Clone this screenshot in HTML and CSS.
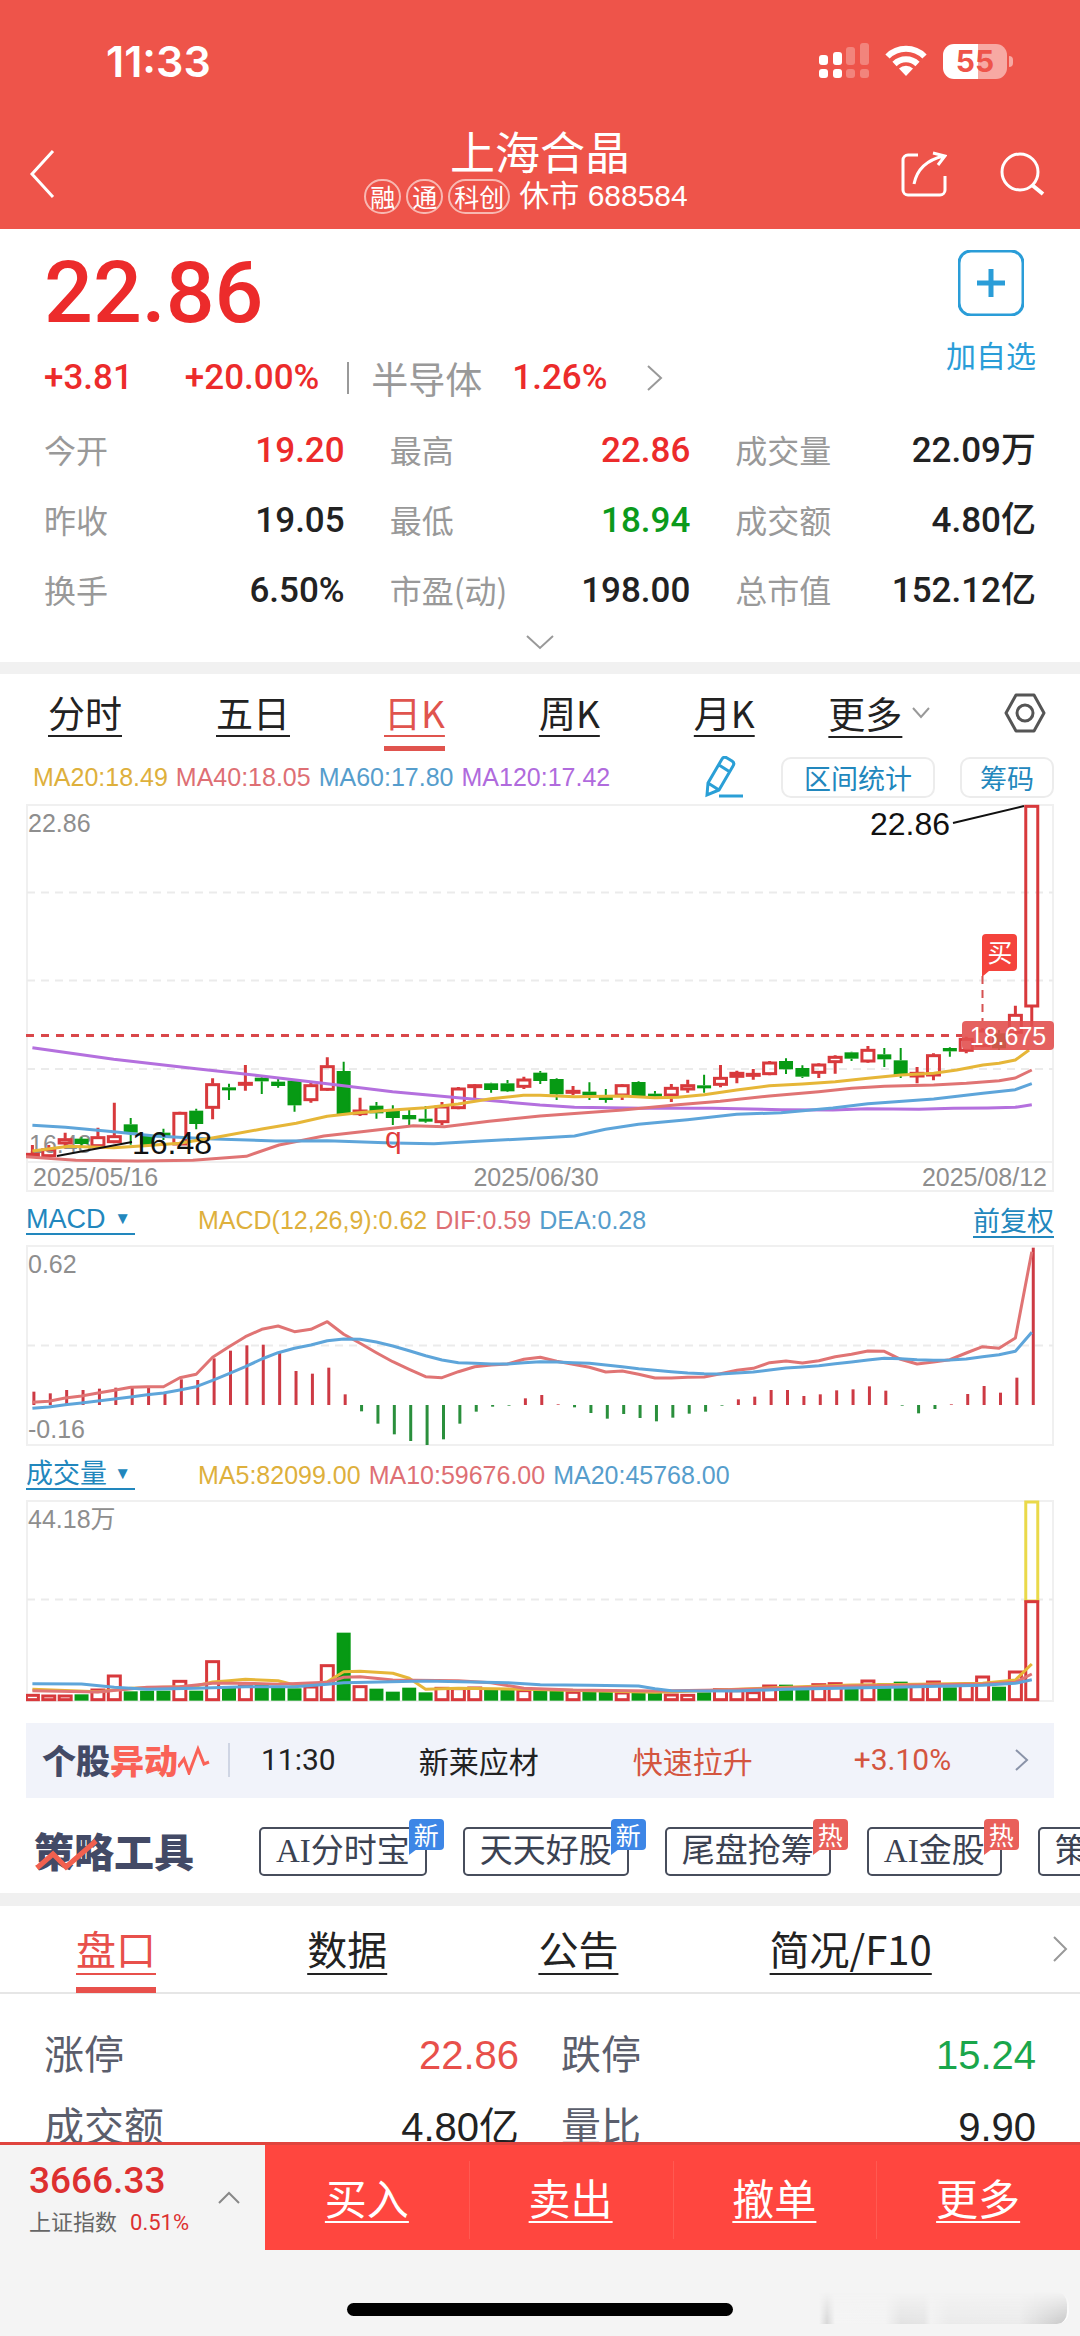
FILE: index.html
```html
<!DOCTYPE html>
<html lang="zh-CN">
<head>
<meta charset="utf-8">
<meta name="viewport" content="width=device-width, initial-scale=1">
<title>上海合晶 688584</title>
<link rel="stylesheet" href="styles.css">
</head>
<body>
<header class="top">
  <div class="status">
    <time class="clock">11:33</time>
    <div class="status-icons">
      <svg width="50" height="36" viewBox="0 0 50 36" aria-hidden="true">
        <g fill="#fff"><rect x="0" y="12" width="9" height="10" rx="3"/><rect x="0" y="26" width="9" height="9" rx="3"/><rect x="14" y="9" width="9" height="13" rx="3"/><rect x="14" y="26" width="9" height="9" rx="3"/></g>
        <g fill="#fff" opacity=".28"><rect x="27" y="4" width="9" height="18" rx="3"/><rect x="27" y="26" width="9" height="9" rx="3"/><rect x="41" y="0" width="9" height="22" rx="3"/><rect x="41" y="26" width="9" height="9" rx="3"/></g>
      </svg>
      <svg width="42" height="32" viewBox="0 0 42 32" aria-hidden="true">
        <g fill="none" stroke="#fff" stroke-width="6"><path d="M2.500 11.500a26 26 0 0 1 37 0"/><path d="M9.500 19a16.500 16.500 0 0 1 23 0"/></g>
        <path d="M21 31l-7-7.500a10 10 0 0 1 14 0z" fill="#fff"/>
      </svg>
      <div class="battery"><span>55</span></div>
    </div>
  </div>
  <div class="titlebar">
    <button class="icon-btn" aria-label="返回">
      <svg width="26" height="50" viewBox="0 0 26 50"><path d="M24 2L3 25l21 23" fill="none" stroke="#fff" stroke-width="3"/></svg>
    </button>
    <div class="title">
      <h1>上海合晶</h1>
      <p><span class="pill">融</span><span class="pill">通</span><span class="pill">科创</span><span class="code">休市 688584</span></p>
    </div>
    <div class="actions">
      <button class="icon-btn" aria-label="分享">
        <svg width="46" height="46" viewBox="0 0 46 46" fill="none" stroke="#fff" stroke-width="3"><path d="M17 4H7a5 5 0 0 0-5 5v30a5 5 0 0 0 5 5h32a5 5 0 0 0 5-5V25"/><path d="M13 33C16 18 25 9 43 5M32 2l12 3-7 9"/></svg>
      </button>
      <button class="icon-btn" aria-label="搜索">
        <svg width="46" height="46" viewBox="0 0 46 46" fill="none" stroke="#fff" stroke-width="3"><circle cx="20" cy="21" r="18"/><path d="M32 34l11 9" stroke-width="4"/></svg>
      </button>
    </div>
  </div>
</header>

<main class="content">
  <section class="quote">
    <div class="quote-head">
      <div>
        <p class="price">22.86</p>
        <p class="change"><span>+3.81</span><span class="pct">+20.00%</span><a class="sector" href="#"><span class="name">半导体</span><span>1.26%</span><svg width="18" height="28" viewBox="0 0 18 28"><path d="M2 2l13 12L2 26" fill="none" stroke="#999" stroke-width="2"/></svg></a></p>
      </div>
      <button class="add"><svg width="66" height="66" viewBox="0 0 66 66" fill="none" stroke="#2a9dd8"><rect x="1" y="1" width="64" height="64" rx="12" stroke-width="3"/><path d="M19 33h28M33 19v28" stroke-width="5"/></svg><span>加自选</span></button>
    </div>
    <dl class="stats">
      <div><dt>今开</dt><dd class="up">19.20</dd></div><div><dt>最高</dt><dd class="up">22.86</dd></div><div><dt>成交量</dt><dd>22.09万</dd></div>
      <div><dt>昨收</dt><dd>19.05</dd></div><div><dt>最低</dt><dd class="down">18.94</dd></div><div><dt>成交额</dt><dd>4.80亿</dd></div>
      <div><dt>换手</dt><dd>6.50%</dd></div><div><dt>市盈(动)</dt><dd>198.00</dd></div><div><dt>总市值</dt><dd>152.12亿</dd></div>
    </dl>
    <button class="expand" aria-label="展开"><svg width="30" height="16" viewBox="0 0 30 16"><path d="M2 2l13 12L28 2" fill="none" stroke="#999" stroke-width="2"/></svg></button>
  </section>

  <section class="charts">
    <div class="periods">
      <nav><a href="#">分时</a><a href="#">五日</a><a href="#" class="active">日K</a><a href="#">周K</a><a href="#">月K</a></nav>
      <button class="more"><span>更多</span><svg width="18" height="12" viewBox="0 0 18 12"><path d="M1 1l8 9 8-9" fill="none" stroke="#999" stroke-width="2"/></svg></button>
      <button class="icon-btn" aria-label="图表设置"><svg width="42" height="42" viewBox="0 0 42 42" fill="none" stroke="#555" stroke-width="3"><path d="M12 3h18l10 18-10 18H12L2 21z" stroke-linejoin="round"/><circle cx="21" cy="21" r="8"/></svg></button>
    </div>
    <div class="tools">
      <p class="legend"><span class="ma-a">MA20:18.49</span><span class="ma-b">MA40:18.05</span><span class="ma-c">MA60:17.80</span><span class="ma-d">MA120:17.42</span></p>
      <div class="tool-btns">
        <button class="icon-btn" aria-label="画线"><svg width="38" height="42" viewBox="0 0 38 42" fill="none" stroke="#2a9fd6" stroke-width="3"><path d="M2 39l1-12L17 3q2-3 5-1l5 3q3 2 1 5L14 34zM14 9l11 7M3 27l11 7"/><path d="M14 40h24"/></svg></button>
        <button class="chip">区间统计</button>
        <button class="chip narrow">筹码</button>
      </div>
    </div>
    <svg id="price" class="plot" viewBox="26 804 1028 388" role="img" aria-label="日K线图">
      <g class="frame"><rect x="27" y="805" width="1026" height="386"/><path d="M27 1162H1053"/></g>
      <path class="grid" d="M27 892.500H1053M27 980.500H1053M27 1069H1053"/>
      <path class="cost" d="M26 1035.500H962"/>
      <text class="axis" x="28" y="832">22.86</text>
      <text class="axis" x="29" y="1153">16.48</text>
      <g class="series"></g>
      <path class="pointer" d="M953 823L1024 806M57 1156L132 1142"/>
      <text class="mark" x="870" y="835">22.86</text>
      <text class="mark" x="132" y="1154">16.48</text>
      <text class="mark event" x="385" y="1148">q</text>
      <path class="buy-line" d="M982.500 976V1021"/>
      <path class="buy" d="M986 934h27q4 0 4 4v29q0 4-4 4h-24l-7 6v-39q0-4 4-4z"/>
      <text class="buy-text" x="1000" y="962">买</text>
      <rect class="tag" x="962" y="1021" width="92" height="29" rx="4"/>
      <text class="tag-text" x="1008" y="1045">18.675</text>
      <text class="axis" x="33" y="1186">2025/05/16</text>
      <text class="axis mid" x="536" y="1186">2025/06/30</text>
      <text class="axis end" x="1047" y="1186">2025/08/12</text>
    </svg>
    <div class="sub-head">
      <a href="#" class="pick">MACD<i>▼</i></a>
      <p class="legend"><span class="ma-a">MACD(12,26,9):0.62</span><span class="ma-b">DIF:0.59</span><span class="ma-c">DEA:0.28</span></p>
      <a href="#" class="adjust">前复权</a>
    </div>
    <svg id="macd" class="plot" viewBox="26 1245 1028 202" role="img" aria-label="MACD">
      <g class="frame"><rect x="27" y="1246" width="1026" height="199"/></g>
      <path class="grid" d="M27 1345.500H1053"/>
      <text class="axis" x="28" y="1273">0.62</text>
      <text class="axis" x="28" y="1438">-0.16</text>
      <g class="series"></g>
    </svg>
    <div class="sub-head">
      <a href="#" class="pick">成交量<i>▼</i></a>
      <p class="legend"><span class="ma-a">MA5:82099.00</span><span class="ma-b">MA10:59676.00</span><span class="ma-c">MA20:45768.00</span></p>
    </div>
    <svg id="volume" class="plot" viewBox="26 1500 1028 202" role="img" aria-label="成交量">
      <g class="frame"><rect x="27" y="1501" width="1026" height="200"/></g>
      <path class="grid" d="M27 1599.500H1053"/>
      <text class="axis" x="28" y="1528">44.18万</text>
      <g class="series"></g>
    </svg>

    <a class="ticker" href="#">
      <span class="ticker-logo">个股<em>异动</em><svg width="32" height="30" viewBox="0 0 32 30"><path d="M0 22L6 14l5 14L20 4l6 15 5-2" fill="none" stroke="#fa6257" stroke-width="3"/></svg></span>
      <span class="t-time">11:30</span><span class="t-name">新莱应材</span><span class="t-kind">快速拉升</span><span class="t-pct">+3.10%</span>
      <svg width="16" height="24" viewBox="0 0 16 24"><path d="M2 2l11 10L2 22" fill="none" stroke="#8a93a8" stroke-width="2"/></svg>
    </a>
    <div class="strategy">
      <h2>策略工具<svg width="66" height="42" viewBox="0 0 66 42"><path d="M3 39l16-14 13 13 30-26" fill="none" stroke="#f2604f" stroke-width="5"/></svg></h2>
      <button>AI分时宝<b class="new">新</b></button>
      <button>天天好股<b class="new">新</b></button>
      <button>尾盘抢筹<b>热</b></button>
      <button>AI金股<b>热</b></button>
      <button>策略选股</button>
    </div>
  </section>

  <section class="detail">
    <nav class="tabs">
      <a href="#" class="active">盘口</a><a href="#">数据</a><a href="#">公告</a><a href="#">简况/F10</a>
      <button class="icon-btn" aria-label="更多栏目"><svg width="16" height="28" viewBox="0 0 16 28"><path d="M2 2l12 12L2 26" fill="none" stroke="#999" stroke-width="2"/></svg></button>
    </nav>
    <dl class="board">
      <div><dt>涨停</dt><dd class="up">22.86</dd></div><div><dt>跌停</dt><dd class="down">15.24</dd></div>
      <div><dt>成交额</dt><dd>4.80亿</dd></div><div><dt>量比</dt><dd>9.90</dd></div>
    </dl>
  </section>
</main>

<footer class="bottom">
  <div class="trade">
    <button class="index">
      <span class="idx"><strong>3666.33</strong><small>上证指数<em>0.51%</em></small></span>
      <svg width="22" height="13" viewBox="0 0 22 13"><path d="M1 12L11 2l10 10" fill="none" stroke="#888" stroke-width="2"/></svg>
    </button>
    <nav><a href="#">买入</a><a href="#">卖出</a><a href="#">撤单</a><a href="#">更多</a></nav>
  </div>
  <div class="home"><span class="bar"></span><span class="smear"></span></div>
</footer>
<script src="chart.js"></script>
</body>
</html>
```
FILE: styles.css
```css
:root {
  --red: #ec2b2b;
  --green: #0b9a1c;
  --blue: #2287bd;
  --cjk: "Noto Sans CJK SC", sans-serif;
}
* { box-sizing: border-box; margin: 0; padding: 0; }
body {
  display: flex;
  flex-direction: column;
  height: 100vh;
  background: #fff;
  color: #222;
  font-family: "Liberation Sans", var(--cjk);
}
a { color: inherit; }
button { border: 0; background: none; color: inherit; font: inherit; }
svg { display: block; flex: none; }
em, i { font-style: normal; }
.icon-btn { display: flex; }

.top { flex: none; background: #ee544a; color: #fff; }
.status {
  display: flex;
  align-items: center;
  justify-content: space-between;
  height: 122px;
  padding: 0 73px 0 106px;
}
.clock { font: 600 43px/50px Inter, sans-serif; }
.status-icons { display: flex; align-items: center; gap: 16px; }
.battery {
  position: relative;
  width: 64px;
  height: 35px;
  border-radius: 11px;
  background: linear-gradient(90deg, #fff 55%, #f7a9a3 55%);
  color: #ee544a;
  font: 700 30px/35px Inter, sans-serif;
  text-align: center;
}
.battery::after {
  content: "";
  position: absolute;
  left: 66px;
  top: 12px;
  width: 4px;
  height: 11px;
  border-radius: 0 4px 4px 0;
  background: #f7a9a3;
}
.titlebar {
  display: grid;
  grid-template-columns: 1fr auto 1fr;
  height: 107px;
  padding: 4px 29px 0;
}
.titlebar > .icon-btn { margin-top: 23px; align-self: start; }
.title { text-align: center; }
.title h1 { font: 400 45px/50px var(--cjk); }
.title p {
  display: flex;
  align-items: center;
  justify-content: center;
  height: 40px;
  padding-right: 28px;
  font-size: 30px;
  line-height: 36px;
}
.pill {
  height: 35px;
  margin-right: 5px;
  padding: 0 4px;
  border: 2px solid #f8b8b2;
  border-radius: 18px;
  font: 400 25px/30px var(--cjk);
}
.code { margin-left: 4px; }
.actions { display: flex; justify-content: flex-end; gap: 53px; margin-top: 25px; padding-right: 5px; }

.content {
  flex: 1;
  min-height: 0;
  overflow-y: auto;
  scrollbar-width: none;
}
.quote { padding: 0 44px; border-bottom: 12px solid #f1f1f1; }
.quote-head { display: flex; justify-content: space-between; padding-top: 14px; }
.price { height: 100px; color: var(--red); font: 500 86px/100px Roboto, sans-serif; }
.change {
  display: flex;
  align-items: center;
  height: 70px;
  color: var(--red);
  font: 500 35px/50px Roboto, sans-serif;
}
.change .pct { margin-left: 52px; }
.sector {
  display: flex;
  align-items: center;
  gap: 30px;
  margin-left: 28px;
  text-decoration: none;
}
.sector::before { content: ""; width: 2px; height: 32px; background: #999; }
.sector .name { margin-left: -8px; color: #999; font: 400 37px/50px var(--cjk); }
.sector svg { margin-left: 8px; }
.add {
  display: flex;
  flex-direction: column;
  align-items: center;
  gap: 18px;
  height: 150px;
  padding-top: 7px;
  color: #2a9dd8;
  font: 400 30px/40px var(--cjk);
}
.stats {
  display: grid;
  grid-template-columns: repeat(3, 1fr);
  column-gap: 45px;
  padding-top: 3px;
}
.stats div, .board div { display: flex; justify-content: space-between; align-items: center; }
.stats div { height: 70px; }
.stats dt { padding-bottom: 4px; color: #999; font: 400 32px/44px var(--cjk); }
.stats dd { font: 500 35px/48px Roboto, var(--cjk); }
.stats .up, .board .up { color: var(--red); }
.stats .down { color: var(--green); }
.expand { display: flex; justify-content: center; width: 100%; height: 36px; padding-top: 8px; }

.periods {
  display: flex;
  align-items: center;
  justify-content: space-between;
  height: 78px;
  padding: 0 34px 0 48px;
  font-family: var(--cjk);
  font-size: 37px;
}
.periods nav { display: flex; gap: 94px; }
.periods a, .more span { text-decoration: underline; text-decoration-thickness: 2px; text-underline-offset: 7px; }
.periods a { height: 76px; line-height: 74px; }
.periods .active { border-bottom: 5px solid #e0544e; color: #e0544e; }
.more { display: flex; align-items: center; gap: 10px; line-height: 74px; }
.tools {
  display: flex;
  align-items: center;
  justify-content: space-between;
  height: 52px;
  padding: 0 26px 2px 33px;
}
.legend { display: flex; gap: 8px; font-size: 25px; line-height: 30px; }
.ma-a { color: #deb03c; }
.ma-b { color: #de6f74; }
.ma-c { color: #569dcc; }
.ma-d { color: #b06bdd; }
.tool-btns { display: flex; align-items: center; gap: 25px; }
.tool-btns .icon-btn { margin-right: 13px; }
.chip {
  height: 41px;
  padding: 0 21px;
  border: 2px solid #ececec;
  border-radius: 10px;
  color: var(--blue);
  font: 400 27px/37px var(--cjk);
}
.chip.narrow { padding: 0 18px; }

.plot { width: calc(100% - 52px); margin: 0 26px; }
.frame { fill: none; stroke: #f0f0f0; stroke-width: 2; }
.grid { stroke: #ebebeb; stroke-width: 2; stroke-dasharray: 8 6; }
.cost { stroke: #d9474a; stroke-width: 3; stroke-dasharray: 8 7; }
.plot text { font-family: "Liberation Sans", var(--cjk); }
.axis { fill: #8e8e8e; font-size: 25px; }
.mid { text-anchor: middle; }
.end { text-anchor: end; }
.mark { fill: #111; font-size: 32px; }
.mark.event { fill: #e03c3c; font-size: 30px; }
.pointer { fill: none; stroke: #111; stroke-width: 2; }
.buy { fill: #f4433c; }
.buy-line { stroke: #d65252; stroke-width: 2; stroke-dasharray: 8 6; }
.buy-text, .tag-text { fill: #fff; font-size: 25px; text-anchor: middle; }
.tag { fill: #e2504f; fill-opacity: .9; }
.rise { fill: none; stroke: #d8393c; stroke-width: 3; }
.fall { fill: #079a14; stroke: #079a14; stroke-width: 2; }
.bar-up { stroke: #cd3a44; stroke-width: 3; }
.bar-down { stroke: #2a8f3c; stroke-width: 3; }
.est { fill: #fff; stroke: #ead94a; stroke-width: 3; }
.line { fill: none; stroke-width: 3; stroke-linejoin: round; }
.line.a { stroke: #e6b638; }
.line.b { stroke: #e07474; }
.line.c { stroke: #5ea5da; }
.line.d { stroke: #b470de; }

.sub-head { display: flex; align-items: center; height: 53px; padding: 2px 26px 0; }
.pick {
  display: flex;
  align-items: center;
  justify-content: space-between;
  width: 109px;
  height: 30px;
  margin-right: 63px;
  padding-right: 4px;
  border-bottom: 2px solid;
  color: var(--blue);
  font-size: 27px;
  line-height: 28px;
  text-decoration: none;
}
.pick i { font-size: 17px; }
.adjust { margin-left: auto; color: var(--blue); font-size: 27px; text-underline-offset: 5px; }

.ticker {
  display: flex;
  align-items: center;
  height: 75px;
  margin: 21px 26px 0;
  padding: 0 24px 2px 16px;
  background: #f1f3fa;
  color: #222;
  font: 400 30px/40px var(--cjk);
  text-decoration: none;
}
.ticker-logo {
  display: flex;
  align-items: center;
  padding-right: 18px;
  border-right: 2px solid #cfd5e4;
  color: #434a66;
  font: 900 34px/34px var(--cjk);
}
.ticker-logo em { color: #fa6257; }
.t-time, .t-pct { font-family: Roboto, sans-serif; }
.t-time { margin-left: 31px; }
.t-name { margin-left: 83px; }
.t-kind { margin-left: 94px; color: #d4553f; }
.t-pct { margin-left: 101px; color: #d4553f; }
.ticker > svg { margin-left: auto; }

.strategy {
  display: flex;
  align-items: center;
  gap: 36px;
  height: 95px;
  padding: 18px 0 6px 34px;
  overflow: hidden;
}
.strategy h2 {
  position: relative;
  flex: none;
  width: 189px;
  padding-bottom: 4px;
  color: #434a66;
  font: 900 40px/46px var(--cjk);
}
.strategy h2 svg { position: absolute; left: 0; top: 2px; }
.strategy button {
  position: relative;
  flex: none;
  height: 49px;
  padding: 0 15px;
  border: 2px solid #474d5c;
  border-radius: 5px;
  color: #3b4252;
  font: 400 33px/45px "Liberation Serif", var(--cjk);
}
.strategy b {
  position: absolute;
  right: -19px;
  top: -10px;
  width: 35px;
  height: 31px;
  border-radius: 4px 4px 4px 0;
  background: #e9605a;
  color: #fff;
  font: 400 25px/30px var(--cjk);
}
.strategy b::after {
  content: "";
  position: absolute;
  left: 0;
  top: 30px;
  border: solid transparent;
  border-width: 0 8px 6px 0;
  border-top: 6px solid #e9605a;
  border-bottom: 0;
}
.strategy .new { background: #3d86e6; }
.strategy .new::after { border-top-color: #3d86e6; }

.detail { border-top: 13px solid #f0f0f0; }
.tabs {
  display: flex;
  justify-content: space-between;
  align-items: center;
  height: 88px;
  padding: 0 12px 0 76px;
  border-bottom: 2px solid #e6e6e6;
  font: 400 40px/86px var(--cjk);
}
.tabs a { height: 88px; text-decoration: underline; text-decoration-thickness: 2px; text-underline-offset: 8px; }
.tabs a + a { margin-left: 31px; }
.tabs .active { border-bottom: 6px solid #e8504b; color: #e8504b; }
.board {
  display: grid;
  grid-template-columns: 1fr 1fr;
  column-gap: 42px;
  padding: 25px 44px 0;
}
.board div { height: 72px; font: 400 40px/60px "Liberation Sans", var(--cjk); }
.board dt { color: #5b5e6c; }
.board .up { color: #e8504b; }
.board .down { color: #1aa64b; }

.bottom { flex: none; background: #f4f4f4; }
.trade { display: flex; height: 108px; border-top: 3px solid #e0443e; }
.index { display: flex; align-items: center; justify-content: space-between; width: 265px; padding: 0 25px 0 29px; text-align: left; }
.idx { display: flex; flex-direction: column; padding-top: 4px; }
.idx strong { color: #dd3030; font: 500 37px/44px Roboto, sans-serif; }
.idx small { color: #666; font: 400 22px/34px var(--cjk); }
.idx em { margin-left: 13px; color: #dd3030; font-family: Roboto, sans-serif; }
.trade nav { display: flex; flex: 1; background: #ff463f; color: #fff; }
.trade nav a {
  flex: 1;
  font: 400 42px/104px var(--cjk);
  text-align: center;
  text-decoration-thickness: 2px;
  text-underline-offset: 6px;
}
.trade nav a + a { background: linear-gradient(#ff5a52, #ff5a52) 0 16px / 1px 78px no-repeat; }
.home { position: relative; display: flex; justify-content: center; height: 86px; padding-top: 53px; }
.bar { width: 386px; height: 13px; border-radius: 7px; background: #000; }
.smear {
  position: absolute;
  right: 11px;
  top: 42px;
  width: 250px;
  height: 32px;
  border-radius: 0 12px 12px 0;
  border-right: 2px solid #fff;
  background: linear-gradient(90deg, #f4f4f4 0, #d6d6d6 8px, #f4f4f4 16px, #f3f3f3 66px, #e2e2e2 82px, #e4e4e4 105px, #f2f2f2 112px, #eaeaea 130px, #ebebeb 200px, #c8c8c8 246px);
  -webkit-mask-image: linear-gradient(transparent, #000);
  mask-image: linear-gradient(transparent, #000);
}
```
FILE: chart.js
```js
const NS = 'http://www.w3.org/2000/svg';
const X = i => 32.4 + 16.383 * i;

function add(parent, tag, cls, attrs) {
  const el = document.createElementNS(NS, tag);
  el.setAttribute('class', cls);
  for (const k in attrs) el.setAttribute(k, attrs[k]);
  parent.appendChild(el);
}
function group(id) { return document.querySelector('#' + id + ' .series'); }
function line(g, cls, pts, base) {
  const d = pts.map(([i, v]) => X(i).toFixed(1) + ',' + (base + v / 3).toFixed(1)).join(' ');
  add(g, 'polyline', 'line ' + cls, { points: d });
}

/* Each candle: direction, body top, body bottom, high, low */
const candles = `R 1120 1130 1095 1130|R 1106 1130 1095 1130|R 1076 1092 1058 1105|G 1076 1092 1072 1098|R 1070 1100 1043 1103|R 1067 1088 968 1090|G 1033 1058 1014 1094|G 1065 1095 1062 1100|G 1058 1072 1046 1080|R 997 1095 995 1097|G 992 1032 986 1048|R 911 985 895 1018|G 922 927 911 960|R 907 913 855 932|G 893 904 888 942|G 905 918 895 923|G 902 976 900 995|R 914 962 905 968|R 857 931 832 933|G 873 1003 845 1005|R 990 1004 953 1008|G 977 1000 966 1016|G 990 1014 976 1035|G 1005 1018 985 1035|G 1016 1024 978 1028|R 978 1028 966 1035|R 924 986 921 988|R 914 919 912 960|G 910 930 908 938|G 910 934 900 936|R 897 922 890 927|G 878 903 873 912|G 897 943 895 960|R 931 938 918 945|G 935 946 907 960|G 950 960 927 968|R 914 948 912 960|G 906 948 904 950|G 941 950 933 952|R 922 948 912 966|R 914 930 899 938|G 916 921 884 938|R 892 916 855 922|R 877 892 872 910|R 880 887 867 899|R 846 884 843 886|G 843 868 835 882|G 864 890 856 894|R 852 880 850 894|R 829 848 826 881|G 817 836 815 843|R 808 846 798 848|G 823 838 804 861|G 841 886 804 894|R 877 891 861 910|R 824 888 820 901|G 804 814 802 830|R 775 814 770 820|R 750 800 745 802|G 760 805 750 810|R 703 760 677 765|R 76 681 76 740`
  .split('|').map(s => s.split(' '));

const price = group('price');
candles.forEach(([dir, top, bottom, high, low], i) => {
  const cls = dir === 'R' ? 'rise' : 'fall';
  const y = v => 780 + v / 3;
  add(price, 'path', cls, { d: `M${X(i)} ${y(high)}V${y(top)}M${X(i)} ${y(bottom)}V${y(low)}` });
  add(price, 'rect', cls, { x: X(i) - 6, y: y(top) + 1, width: 12, height: Math.max(1, (bottom - top) / 3 - 2) });
});
/* Converts horizontal chart units to a candle index */
const at = pts => pts.map(([x, v]) => [(x - 94) / 47.57, v]);
line(price, 'd', at([[94,803],[330,838],[570,866],[760,888],[950,911],[1140,935],[1330,953],[1568,975],[1668,982],[1868,985],[2068,985],[2268,989],[2418,990],[2518,986],[2668,988],[2768,985],[2868,984],[2948,982],[2996,974]]), 780);
line(price, 'b', at([[75,1130],[220,1141],[400,1143],[560,1141],[715,1129],[810,1095],[940,1068],[1050,1055],[1200,1037],[1290,1040],[1420,1024],[1568,1008],[1808,990],[1968,974],[2091,964],[2234,948],[2377,935],[2473,925],[2568,919],[2711,915],[2806,910],[2901,902],[2948,894],[2996,870]]), 780);
line(price, 'c', at([[94,1036],[190,1042],[330,1055],[450,1068],[600,1076],[800,1083],[950,1082],[1140,1089],[1260,1091],[1400,1083],[1568,1074],[1668,1068],[1758,1048],[1854,1033],[1996,1019],[2139,1003],[2268,998],[2418,984],[2520,971],[2711,957],[2854,940],[2948,929],[2996,911]]), 780);
line(price, 'a', at([[94,1113],[200,1099],[330,1103],[420,1097],[520,1090],[620,1073],[760,1047],[860,1030],[950,1009],[1040,998],[1140,990],[1235,983],[1330,972],[1425,956],[1520,946],[1568,946],[1668,950],[1808,948],[1901,953],[1968,952],[2044,944],[2139,930],[2234,917],[2330,912],[2425,905],[2520,895],[2616,885],[2711,880],[2778,870],[2854,855],[2901,850],[2948,840],[2988,810]]), 780);

const macd = group('macd');
const hist = [605,610,600,600,596,593,590,588,608,568,570,505,482,466,464,488,543,551,533,613,664,701,733,753,765,748,701,665,650,647,625,615,643,652,669,686,672,684,694,683,671,665,647,628,620,600,600,618,613,601,598,589,602,647,670,657,643,612,588,608,563,173];
hist.forEach((v, i) => add(macd, 'path', v < 645 ? 'bar-up' : 'bar-down', { d: `M${X(i) + 1.5} 1405V${1190 + v / 3}` }));
const dif = [637,634,624,618,609,601,592,590,590,563,553,502,470,440,418,408,425,418,395,433,460,488,515,538,560,563,545,530,525,522,508,502,514,523,532,546,543,553,564,564,562,561,551,541,535,518,513,519,512,500,493,483,484,508,522,516,509,489,470,475,444,185];
const dea = [655,651,644,639,633,627,621,614,609,600,590,571,551,530,507,488,475,465,452,447,448,456,468,482,497,510,518,520,522,522,518,515,516,518,520,525,530,536,541,545,549,551,552,549,546,540,534,531,527,521,516,510,505,506,509,511,510,507,500,494,484,427];
line(macd, 'b', dif.map((v, i) => [i, v]), 1190);
line(macd, 'c', dea.map((v, i) => [i, v]), 1190);

const volume = group('volume');
add(volume, 'rect', 'est', { x: X(61) - 6, y: 1502, width: 12, height: 99 });
const vol = [733,735,735,733,717,675,724,722,722,691,722,632,708,705,705,713,715,708,644,548,707,716,725,713,727,712,713,711,719,719,719,719,721,724,722,724,726,728,729,732,733,727,716,719,725,705,704,712,701,698,710,690,700,695,705,693,712,703,678,710,663,452];
vol.forEach((v, i) => add(volume, 'rect', candles[i][0] === 'R' ? 'rise' : 'fall', { x: X(i) - 6, y: 1451 + v / 3, width: 12, height: (752 - v) / 3 - 2 }));
line(volume, 'a', [[0,718],[4,725],[6,715],[9,710],[10,708],[11,696],[12,692],[13,688],[15,692],[16,705],[17,704],[18,695],[19,665],[20,664],[21,667],[22,670],[23,685],[24,718],[26,715],[30,718],[34,722],[38,727],[41,722],[43,718],[46,712],[50,705],[54,703],[58,700],[60,690],[61,642]], 1450);
line(volume, 'b', [[0,722],[4,726],[7,712],[9,710],[11,700],[13,700],[15,703],[18,697],[19,682],[20,680],[22,690],[26,692],[28,698],[30,715],[33,720],[38,723],[42,720],[46,714],[50,708],[54,705],[58,702],[60,697],[61,672]], 1450);
line(volume, 'c', [[0,701],[3,702],[5,712],[7,718],[10,715],[13,710],[16,710],[18,703],[19,698],[24,693],[29,698],[31,704],[34,706],[37,708],[38,716],[39,722],[43,723],[46,718],[50,714],[54,710],[58,706],[60,700],[61,689]], 1450);
```
